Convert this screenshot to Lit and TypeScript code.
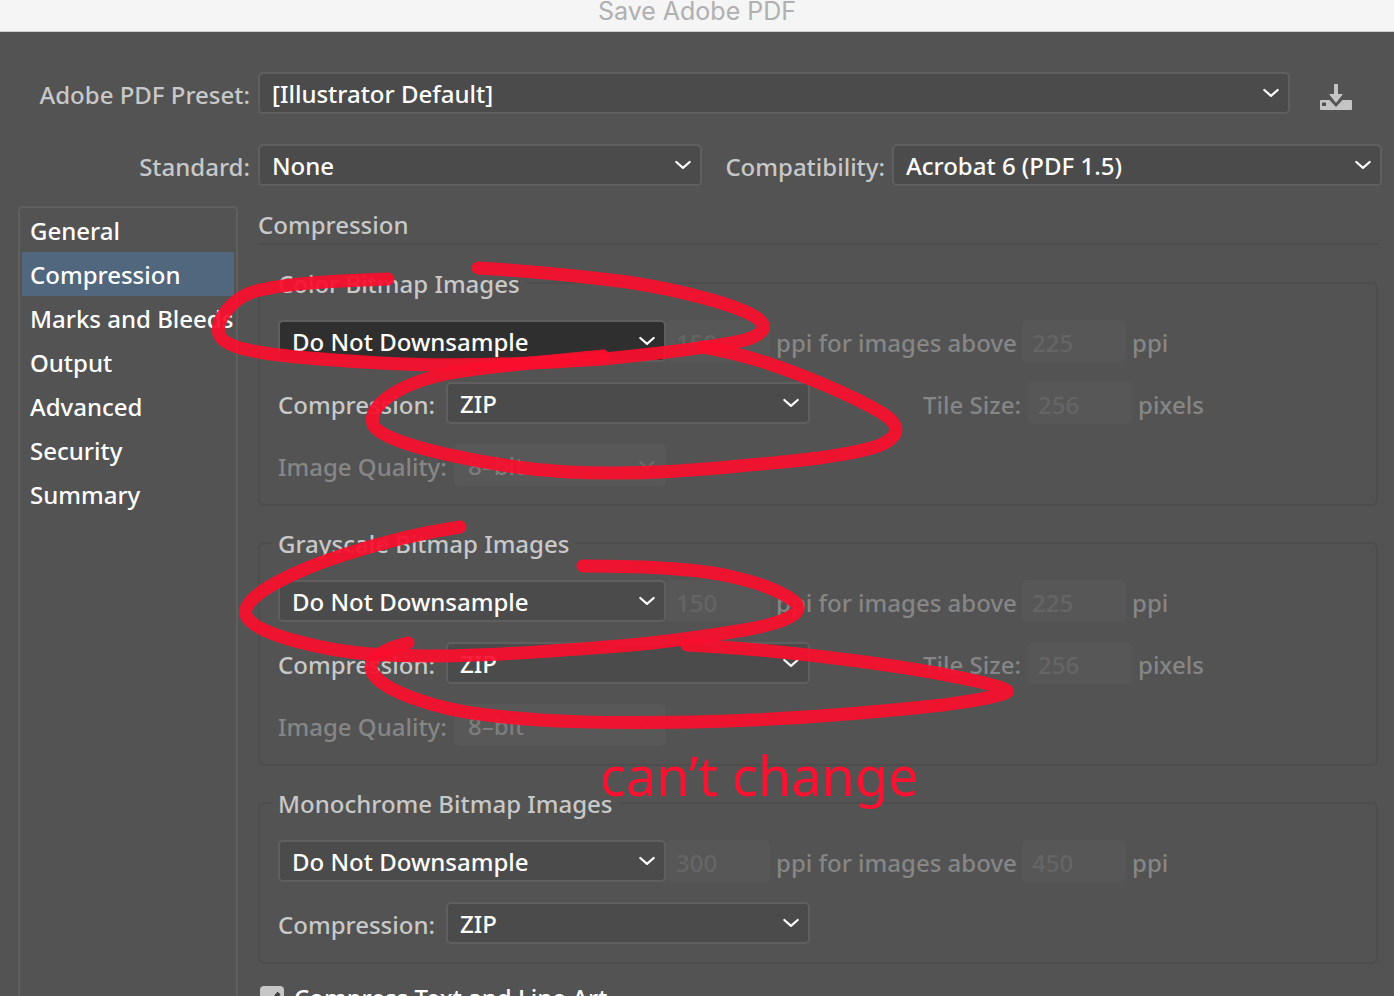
import { LitElement, html, css, svg, nothing } from "lit";
import { customElement, property } from "lit/decorators.js";

interface ImageGroup {
  id: string;
  title: string;
  resolution: string;
  threshold: string;
  tileSize?: string;
  quality?: string;
  active?: boolean;
}

const GROUPS: ImageGroup[] = [
  { id: "color", title: "Color Bitmap Images", resolution: "150", threshold: "225", tileSize: "256", quality: "8–bit", active: true },
  { id: "gray", title: "Grayscale Bitmap Images", resolution: "150", threshold: "225", tileSize: "256", quality: "8–bit" },
  { id: "mono", title: "Monochrome Bitmap Images", resolution: "300", threshold: "450" },
];

const SECTIONS = ["General", "Compression", "Marks and Bleeds", "Output", "Advanced", "Security", "Summary"];

/** Hand-drawn loops around the locked settings. */
const STROKES = [
  "M388 279C330 281 275 284 250 293C232 300 215 320 219 334C225 354 300 358 380 363C450 367 530 364 603 359C640 355 700 350 745 340C765 334 768 326 757 318C738 305 680 290 627 282C580 276 530 271 478 268",
  "M603 356C550 361 490 366 450 373C400 383 368 405 373 424C378 445 500 468 567 472C650 476 720 468 793 461C830 457 860 452 878 446C900 437 902 426 882 413C850 394 800 374 767 363C745 356 720 350 703 347",
  "M460 527C420 533 380 543 343 555C300 569 240 595 246 615C252 635 330 651 370 654C450 660 550 651 620 646C670 642 720 634 750 629C790 621 805 612 795 602C780 590 755 582 733 577C700 569 640 566 583 566",
  "M408 643C385 648 370 658 371 668C374 690 440 710 487 715C550 723 610 723 693 722C780 720 870 713 943 705C970 701 1000 697 1007 692C1012 688 960 676 893 666C830 657 750 648 687 645",
];

@customElement("drop-down")
export class DropDown extends LitElement {
  @property() label = "";
  @property() value = "";
  @property({ type: Boolean }) disabled = false;
  @property({ type: Boolean, reflect: true }) active = false;

  static styles = css`
    :host {
      display: grid;
      min-width: 0;
    }
    .select,
    .arrow {
      grid-area: 1 / 1;
    }
    .select {
      appearance: none;
      box-sizing: border-box;
      width: 100%;
      height: 42px;
      margin: 0;
      padding: 2px 36px 0 12px;
      border: 2px solid #5f5f5f;
      border-radius: 5px;
      background: #4b4b4b;
      color: #fff;
      font: inherit;
      outline: none;
    }
    :host([active]) .select {
      background: #2f2f2f;
    }
    .select:disabled {
      border-color: #585858;
      background: #585858;
      color: #7d7d7d;
      opacity: 1;
    }
    .arrow {
      justify-self: end;
      align-self: center;
      margin-right: 10px;
      pointer-events: none;
      color: #fff;
    }
    .select:disabled + .arrow {
      color: #6c6c6c;
    }
  `;

  render() {
    return html`
      <select class="select" aria-label=${this.label} ?disabled=${this.disabled}>
        <option selected>${this.value}</option>
      </select>
      <svg class="arrow" width="18" height="10" viewBox="0 0 18 10" fill="none" stroke="currentColor" stroke-width="2.2" stroke-linecap="round" stroke-linejoin="round" aria-hidden="true">
        <path d="M2.3 2 9 7.8 15.7 2" />
      </svg>
    `;
  }
}

@customElement("app-root")
export class AppRoot extends LitElement {
  static styles = css`
    :host {
      display: flex;
      flex-direction: column;
      position: relative;
      height: 100vh;
      overflow: hidden;
      background: #535353;
      color: #c8c8c8;
      font-family: "Noto Sans", "Open Sans", sans-serif;
      font-size: 24px;
      font-weight: 500;
      line-height: 32px;
      white-space: nowrap;
    }
    .titlebar {
      flex: none;
      height: 31px;
      margin: 0;
      border-bottom: 1px solid #cfcfcf;
      background: #f5f5f5;
      color: #b0b0b0;
      font: 400 25px/22px Inter, sans-serif;
      text-align: center;
    }
    .presets {
      flex: none;
      display: grid;
      gap: 30px;
      padding: 40px 12px 20px 18px;
    }
    .preset-row {
      display: flex;
      align-items: center;
    }
    .text {
      padding-top: 4px;
    }
    .preset-label {
      width: 232px;
      margin-right: 8px;
      text-align: right;
    }
    .grow {
      flex: 1 1 0;
    }
    .standard {
      flex: 444 1 0;
    }
    .compat-label {
      box-sizing: border-box;
      width: 190px;
      padding-right: 7px;
      text-align: right;
    }
    .compat {
      flex: 490 1 0;
    }
    .save {
      display: grid;
      margin: 0 30px;
      padding: 8px 0 0;
      border: 0;
      background: none;
      color: #c4c4c4;
    }
    .body {
      flex: 1 1 0;
      min-height: 0;
      display: flex;
      gap: 20px;
      padding: 0 16px 0 18px;
    }
    .sidebar {
      flex: none;
      box-sizing: border-box;
      width: 220px;
      padding: 0 2px;
      border: 2px solid #5f5f5f;
      border-bottom: 0;
      border-radius: 5px 5px 0 0;
    }
    .item {
      display: block;
      padding: 2px 8px 0;
      color: #fff;
      line-height: 42px;
      text-decoration: none;
    }
    .item.current {
      background: #50677e;
    }
    .panel {
      flex: 1 1 0;
      min-width: 0;
    }
    .heading {
      margin: 0 0 19px;
      border-bottom: 2px solid #4d4d4d;
      font-size: 24px;
      font-weight: 500;
      line-height: 37px;
    }
    .group {
      display: block;
      min-width: 0;
      margin: 0 0 18px;
      padding: 18px;
      border: 2px solid #4d4d4d;
      border-radius: 6px;
    }
    .legend {
      margin-left: -6px;
      padding: 2px 6px 0;
      line-height: 36px;
    }
    .rows {
      display: grid;
      gap: 20px;
    }
    .row {
      display: grid;
      align-items: center;
    }
    .row.sampling {
      grid-template-columns: 388px 104px 252px 104px auto;
    }
    .row.method {
      grid-template-columns: 168px 364px 218px 104px auto;
    }
    .row.quality {
      grid-template-columns: 176px 212px;
      justify-content: start;
    }
    .muted {
      color: #868686;
    }
    .above {
      padding-left: 6px;
    }
    .tile {
      padding-right: 7px;
      text-align: right;
    }
    .unit {
      padding-left: 6px;
    }
    .number {
      box-sizing: border-box;
      width: 100%;
      height: 42px;
      padding: 2px 10px 0;
      border: 0;
      border-radius: 5px;
      background: #575757;
      color: #656565;
      font: inherit;
    }
    .option {
      display: flex;
      align-items: center;
      gap: 10px;
      padding-left: 2px;
      color: #fff;
    }
    .box {
      flex: none;
      display: grid;
    }
    .check,
    .tick {
      grid-area: 1 / 1;
    }
    .check {
      appearance: none;
      width: 24px;
      height: 24px;
      margin: 0;
      border-radius: 4px;
      background: #c6c6c6;
    }
    .tick {
      pointer-events: none;
    }
    .markup {
      position: absolute;
      top: 0;
      left: 0;
      pointer-events: none;
    }
    .stroke {
      fill: none;
      stroke: #fa0f2d;
      stroke-width: 13px;
      stroke-linecap: round;
      stroke-linejoin: round;
      opacity: 0.93;
    }
    .note {
      fill: #fa1230;
      font-family: "Noto Sans", sans-serif;
      font-size: 54px;
      font-weight: 400;
    }
  `;

  private renderGroup(g: ImageGroup) {
    return html`
      <fieldset class="group">
        <legend class="legend">${g.title}</legend>
        <div class="rows">
          <div class="row sampling">
            <drop-down label="${g.title} sampling" value="Do Not Downsample" ?active=${g.active}></drop-down>
            <input class="number" aria-label="Resolution" .value=${g.resolution} disabled />
            <label class="text muted above" for="${g.id}-above">ppi for images above</label>
            <input class="number" id="${g.id}-above" .value=${g.threshold} disabled />
            <span class="text muted unit">ppi</span>
          </div>
          <div class="row method">
            <span class="text">Compression:</span>
            <drop-down label="Compression" value="ZIP"></drop-down>
            ${g.tileSize
              ? html`<label class="text muted tile" for="${g.id}-tile">Tile Size:</label>
                  <input class="number" id="${g.id}-tile" .value=${g.tileSize} disabled />
                  <span class="text muted unit">pixels</span>`
              : nothing}
          </div>
          ${g.quality
            ? html`<div class="row quality">
                <span class="text muted">Image Quality:</span>
                <drop-down label="Image Quality" value=${g.quality} disabled></drop-down>
              </div>`
            : nothing}
        </div>
      </fieldset>
    `;
  }

  render() {
    return html`
      <h1 class="titlebar">Save Adobe PDF</h1>
      <div class="presets">
        <div class="preset-row">
          <span class="text preset-label">Adobe PDF Preset:</span>
          <drop-down class="grow" label="Adobe PDF Preset" value="[Illustrator Default]"></drop-down>
          <button class="save" aria-label="Save preset">
            <svg width="32" height="26" viewBox="0 0 32 26" fill="currentColor" aria-hidden="true">
              <path d="M14 0h4v10h5l-7 9-7-9h5z" />
              <path fill-rule="evenodd" d="M1 16h8.500l6.500 7 6.500-7H31a1 1 0 0 1 1 1v8a1 1 0 0 1-1 1H1a1 1 0 0 1-1-1v-8a1 1 0 0 1 1-1zM2 18.500v3.500h4v-3.500z" />
            </svg>
          </button>
        </div>
        <div class="preset-row">
          <span class="text preset-label">Standard:</span>
          <drop-down class="standard" label="Standard" value="None"></drop-down>
          <span class="text compat-label">Compatibility:</span>
          <drop-down class="compat" label="Compatibility" value="Acrobat 6 (PDF 1.5)"></drop-down>
        </div>
      </div>
      <div class="body">
        <nav class="sidebar">
          ${SECTIONS.map((s) => html`<a class="item ${s === "Compression" ? "current" : ""}" href="#">${s}</a>`)}
        </nav>
        <main class="panel">
          <h2 class="heading">Compression</h2>
          ${GROUPS.map((g) => this.renderGroup(g))}
          <label class="option">
            <span class="box">
              <input class="check" type="checkbox" checked />
              <svg class="tick" width="24" height="24" viewBox="0 0 24 24" fill="none" stroke="#3d3d3d" stroke-width="4" aria-hidden="true">
                <path d="M5 12.500 10 18 19 7" />
              </svg>
            </span>
            Compress Text and Line Art
          </label>
        </main>
      </div>
      <svg class="markup" width="1394" height="996" viewBox="0 0 1394 996">
        ${STROKES.map((d) => svg`<path class="stroke" d=${d} />`)}
        <text class="note" x="600" y="796">can’t change</text>
      </svg>
    `;
  }
}
